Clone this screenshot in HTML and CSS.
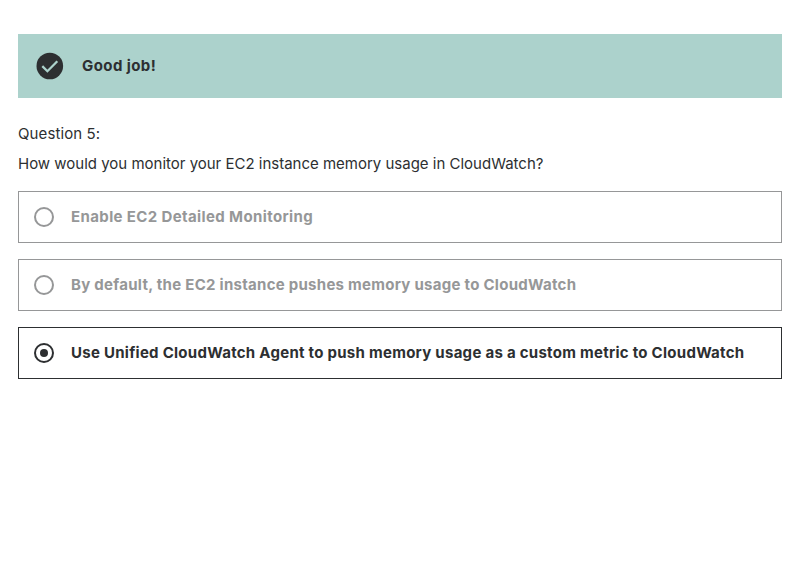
FILE: index.html
```html
<!DOCTYPE html>
<html lang="en">
<head>
<meta charset="utf-8">
<title>Quiz</title>
<link rel="stylesheet" href="styles.css">
</head>
<body>
<main class="quiz">
  <div class="alert">
    <svg class="alert-icon" viewBox="0 0 28 28"><circle cx="13.8" cy="14" r="13.3" fill="#2d2f31"/><path d="M6.3 14.1l5.1 5.1L21.3 9.2" fill="none" stroke="#acd2cc" stroke-width="2.3"/></svg>
    <strong class="alert-title">Good job!</strong>
  </div>
  <div class="question">
    <p class="line number">Question 5:</p>
    <p class="line prompt">How would you monitor your EC2 instance memory usage in CloudWatch?</p>
  </div>
  <ul class="answers">
    <li class="answer"><i class="radio"></i><span class="label wide">Enable EC2 Detailed Monitoring</span></li>
    <li class="answer"><i class="radio"></i><span class="label">By default, the EC2 instance pushes memory usage to CloudWatch</span></li>
    <li class="answer selected"><i class="radio"></i><span class="label">Use Unified CloudWatch Agent to push memory usage as a custom metric to CloudWatch</span></li>
  </ul>
</main>
</body>
</html>
```
FILE: styles.css
```css
* { box-sizing: border-box; }
body { margin: 0; background: #fff; color: #2d2f31; font-family: Inter, "Liberation Sans", sans-serif; font-size: 15px; }
.quiz { padding: 34px 27px 0 18px; }
.alert { display: flex; align-items: center; height: 64px; padding-left: 18px; background: #acd2cc; }
.alert-icon { width: 28px; height: 28px; }
.alert-title { margin-left: 18px; padding-bottom: 2px; font-weight: 700; letter-spacing: 0.42px; }
.question { padding-top: 21px; }
.line { margin: 0; height: 30px; line-height: 30px; white-space: nowrap; }
.number { letter-spacing: 0.1px; }
.prompt { letter-spacing: -0.005px; }
.answers { list-style: none; margin: 12px 0 0; padding: 0; display: grid; gap: 16px; }
.answer { display: flex; align-items: center; height: 52px; padding-left: 15px; border: 1px solid #969798; color: #969798; font-weight: 700; white-space: nowrap; }
.label { padding-bottom: 2px; letter-spacing: 0.275px; }
.wide { letter-spacing: 0.38px; }
.radio { display: grid; place-items: center; width: 20px; height: 20px; border: 2px solid currentColor; border-radius: 50%; margin-right: 17px; }
.selected { color: #2d2f31; border-color: #2d2f31; }
.selected .radio::after { content: ""; width: 8px; height: 8px; border-radius: 50%; background: currentColor; }
```
